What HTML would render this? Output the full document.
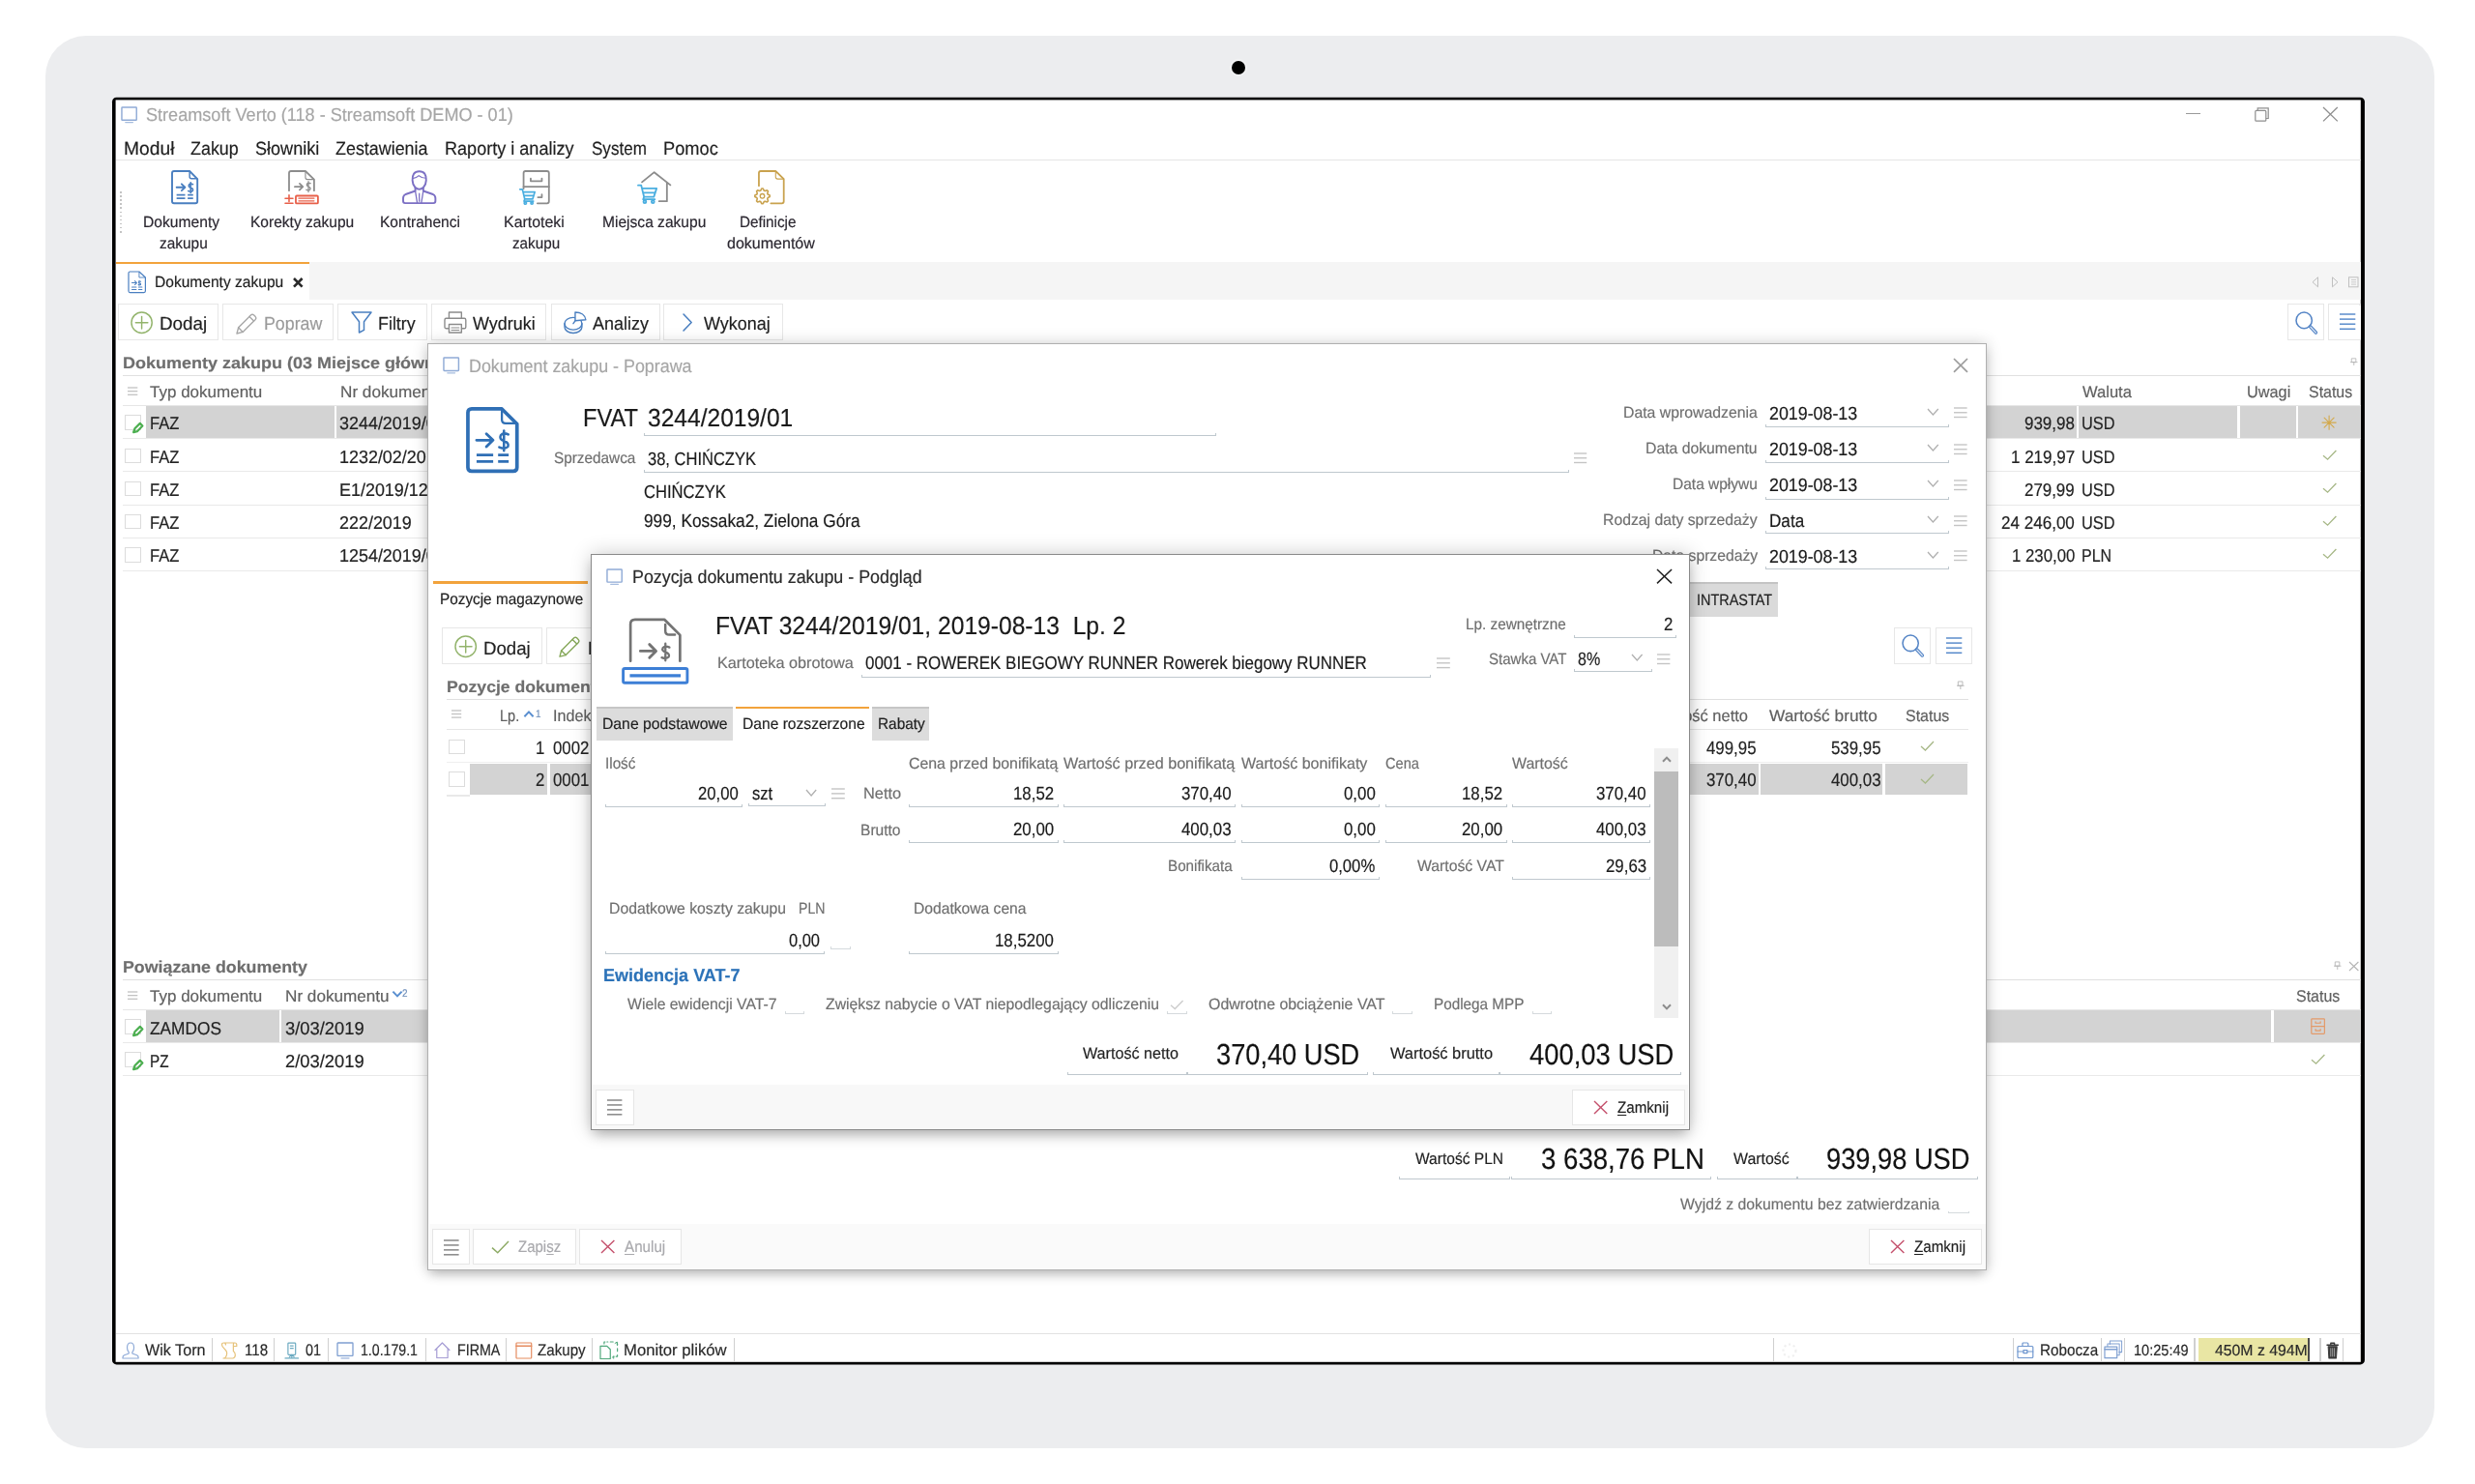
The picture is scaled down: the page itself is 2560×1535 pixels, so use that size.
<!DOCTYPE html>
<html lang="pl"><head><meta charset="utf-8"><title>Streamsoft Verto</title><style>
html,body{margin:0;padding:0;background:#fff;}
body{width:2560px;height:1535px;position:relative;overflow:hidden;font-family:"Liberation Sans",sans-serif;color:#222;filter:blur(0.45px);}
div,span.t,svg{position:absolute;}
span.t{white-space:pre;line-height:1;transform-origin:0 0;text-rendering:geometricPrecision;-webkit-text-stroke:0.18px currentColor;}
svg{overflow:visible;fill:none;}
u{text-decoration:underline;text-decoration-thickness:1px;text-underline-offset:2px;}
</style></head><body>
<div style="left:47.0px;top:37.3px;width:2471.3px;height:1460.5px;background:#ecedef;border-radius:42px;"></div>
<div style="left:1273.7px;top:62.6px;width:14.4px;height:14.4px;border-radius:50%;background:#000;box-shadow:0 0 2px 1.5px rgba(255,255,255,.55);"></div>
<svg style="left:0;top:0" width="2560" height="1535"><rect x="116" y="100.8" width="2329.9" height="1310.6" rx="4.5" fill="#000"/><rect x="119.6" y="103.4" width="2322.2" height="1305.4" fill="#fff"/></svg>
<svg style="left:125.00px;top:109.60px;" width="17.20" height="17.60" viewBox="0 0 18 18" preserveAspectRatio="none" stroke="#90abd6" stroke-width="1.5" stroke-linecap="round" stroke-linejoin="round"><rect x="1" y="1" width="16" height="13.6" rx="0.6"/><path d="M5 17h8" stroke-width="1.3" stroke-opacity="0.8"/></svg>
<span class="t" style="left:151.20px;top:110px;font-size:19.0px;transform:scaleX(0.9523);color:#a6a6a6;">Streamsoft Verto (118 - Streamsoft DEMO - 01)</span>
<div style="left:2261.0px;top:116.6px;width:15.0px;height:1.2px;background:#9a9a9a;"></div>
<svg style="left:2331.5px;top:111px" width="15" height="15" viewBox="0 0 15 15" stroke="#8e8e8e" stroke-width="1.2"><path d="M3.2 3.2V0.8H14.2V11.5H11.8"/><rect x="0.8" y="3.4" width="11" height="10.8" rx="1"/></svg>
<svg style="left:2400.40px;top:108.20px" width="20.80" height="20.40" stroke="#8e8e8e" stroke-width="1.3"><path d="M3 3L17.80 17.40M17.80 3L3 17.40"/></svg>
<span class="t" style="left:127.70px;top:145px;font-size:19.2px;transform:scaleX(1.0034);color:#1f1f1f;">Moduł</span>
<span class="t" style="left:196.70px;top:145px;font-size:19.2px;transform:scaleX(0.9330);color:#1f1f1f;">Zakup</span>
<span class="t" style="left:263.50px;top:145px;font-size:19.2px;transform:scaleX(0.9409);color:#1f1f1f;">Słowniki</span>
<span class="t" style="left:347.40px;top:145px;font-size:19.2px;transform:scaleX(0.9324);color:#1f1f1f;">Zestawienia</span>
<span class="t" style="left:460.20px;top:145px;font-size:19.2px;transform:scaleX(0.9416);color:#1f1f1f;">Raporty i analizy</span>
<span class="t" style="left:611.70px;top:145px;font-size:19.2px;transform:scaleX(0.8886);color:#1f1f1f;">System</span>
<span class="t" style="left:685.70px;top:145px;font-size:19.2px;transform:scaleX(0.9512);color:#1f1f1f;">Pomoc</span>
<div style="left:119.5px;top:165.2px;width:2322.5px;height:1.3px;background:#e6e6e6;"></div>
<div style="left:124.3px;top:198.0px;width:1.4px;height:1.6px;background:#c4c4c4;"></div>
<div style="left:124.3px;top:202.1px;width:1.4px;height:1.6px;background:#c4c4c4;"></div>
<div style="left:124.3px;top:206.2px;width:1.4px;height:1.6px;background:#c4c4c4;"></div>
<div style="left:124.3px;top:210.3px;width:1.4px;height:1.6px;background:#c4c4c4;"></div>
<div style="left:124.3px;top:214.4px;width:1.4px;height:1.6px;background:#c4c4c4;"></div>
<div style="left:124.3px;top:218.5px;width:1.4px;height:1.6px;background:#c4c4c4;"></div>
<div style="left:124.3px;top:222.6px;width:1.4px;height:1.6px;background:#c4c4c4;"></div>
<div style="left:124.3px;top:226.7px;width:1.4px;height:1.6px;background:#c4c4c4;"></div>
<div style="left:124.3px;top:230.8px;width:1.4px;height:1.6px;background:#c4c4c4;"></div>
<div style="left:124.3px;top:234.9px;width:1.4px;height:1.6px;background:#c4c4c4;"></div>
<div style="left:124.3px;top:239.0px;width:1.4px;height:1.6px;background:#c4c4c4;"></div>
<svg style="left:176.60px;top:175.80px;" width="28.20" height="35.30" viewBox="0 0 28 35" preserveAspectRatio="none" stroke="#4a7fc0" stroke-width="1.9" stroke-linecap="round" stroke-linejoin="round"><path d="M3 1H19L27 9V32Q27 34 25 34H3Q1 34 1 32V3Q1 1 3 1Z"/><path d="M19 1.5V6.6Q19 8.6 21 8.6H26.5" stroke-width="1.44"/><path d="M5.6 17.6H14M10.8 14.2L14.3 17.6L10.8 21" stroke-width="1.80"/><path d="M22.4 14.6Q19.8 13.3 18.4 15Q17.4 17 20 17.9Q23 18.9 22.2 21Q20.8 22.6 17.6 21.3M20.1 12.6V23.2" stroke-width="1.62"/><path d="M5.6 25.4H14.4M17 25.4H22.6M5.6 28.9H14.4M17 28.9H22.6" stroke-width="1.80" stroke-linecap="butt"/></svg>
<svg style="left:294.30px;top:175.80px;" width="35.90" height="35.30" viewBox="0 0 36 35" preserveAspectRatio="none" stroke="#8c8c8c" stroke-width="1.8" stroke-linecap="round" stroke-linejoin="round"><g stroke="#8c8c8c"><path d="M5 21V3Q5 1 7 1H22L31 9.5V21"/><path d="M22 1.5V7.5Q22 9.5 24 9.5H30.5" stroke-width="1.1"/><path d="M11 17H19M16 13.8L19.3 17L16 20.2"/><path d="M27.2 13.6Q24.6 12.4 23.6 14.1Q22.9 16 25.2 16.9Q27.9 17.9 26.9 19.9Q25.4 21.3 22.8 20.1M25.1 11.6V22.3" stroke-width="1.3"/></g><g stroke="#e8604a"><path d="M1 29H9M5 25.5V32.2M1 34H9" stroke-width="1.6"/><rect x="12" y="26.3" width="23" height="7.8" rx="1"/><path d="M15 28.9H31M15 31.6H31" stroke-width="1.2"/></g></svg>
<svg style="left:415.80px;top:175.80px;" width="35.40" height="35.30" viewBox="0 0 35 35" preserveAspectRatio="none" stroke="#7c70c4" stroke-width="1.9" stroke-linecap="round" stroke-linejoin="round"><path d="M10.5 10.5Q10 1.2 17.5 1.2Q25 1.2 24.5 10.5Q24.3 15 21.8 17.6Q19.6 19.6 17.5 19.6Q15.4 19.6 13.2 17.6Q10.7 15 10.5 10.5Z"/><path d="M10.6 8.2Q14 8.6 17 5.6Q20.5 8.2 24.4 8.2" stroke-width="1.2"/><path d="M13.4 18.4V21.3L3.5 24.8Q1 26 1 28.8V31.8Q1 33.8 3 33.8H32Q34 33.8 34 31.8V28.8Q34 26 31.5 24.8L21.6 21.3V18.4"/><path d="M13.4 21.3L15.4 33.5M21.6 21.3L19.6 33.5M17.5 24V32" stroke-width="1.3"/></svg>
<svg style="left:537.30px;top:175.80px;" width="31.80" height="35.30" viewBox="0 0 32 35" preserveAspectRatio="none" stroke="#8c8c8c" stroke-width="1.8" stroke-linecap="round" stroke-linejoin="round"><g stroke="#8c8c8c"><path d="M4.6 19V3Q4.6 1 6.6 1H29Q31 1 31 3V32Q31 34 29 34H19"/><path d="M4.6 17H31"/><path d="M12 8.5V11.2H23.6V8.5M19.5 27.8H23.6V25"/></g><g stroke="#4aaee0" stroke-width="1.7"><path d="M0.80 19.70H3.40L5.80 29.70H14.00L16.30 22.40H4.20M5.20 26.20H15.20M5.80 29.70L5.00 31.80H14.80"/><circle cx="6.40" cy="33.80" r="1.15"/><circle cx="13.20" cy="33.80" r="1.15"/></g></svg>
<svg style="left:658.80px;top:177.00px;" width="35.40" height="34.10" viewBox="0 0 35 34.5" preserveAspectRatio="none" stroke="#8c8c8c" stroke-width="1.8" stroke-linecap="round" stroke-linejoin="round"><g stroke="#8c8c8c"><path d="M5 11.5L17.5 1.2L34 14.5M30.5 12V31.5H22.5"/></g><g stroke="#4aaee0" stroke-width="1.8"><path d="M1.00 14.81H4.17L7.10 27.01H17.10L19.91 18.10H5.15M6.37 22.74H18.57M7.10 27.01L6.12 29.57H18.08"/><circle cx="7.83" cy="32.01" r="1.40"/><circle cx="16.13" cy="32.01" r="1.40"/></g></svg>
<svg style="left:779.70px;top:175.80px;" width="31.70" height="35.30" viewBox="0 0 32 35" preserveAspectRatio="none" stroke="#c9a24e" stroke-width="1.8" stroke-linecap="round" stroke-linejoin="round"><path d="M5 16V3Q5 1 7 1H22.5L31 9V32Q31 34 29 34H17.5"/><path d="M22.5 1.5V7Q22.5 9 24.5 9H30.5" stroke-width="1.1"/><path d="M16.36 25.84L16.36 27.36L14.34 28.34L13.89 29.43L14.63 31.55L13.55 32.63L11.43 31.89L10.34 32.34L9.36 34.36L7.84 34.36L6.86 32.34L5.77 31.89L3.65 32.63L2.57 31.55L3.31 29.43L2.86 28.34L0.84 27.36L0.84 25.84L2.86 24.86L3.31 23.77L2.57 21.65L3.65 20.57L5.77 21.31L6.86 20.86L7.84 18.84L9.36 18.84L10.34 20.86L11.43 21.31L13.55 20.57L14.63 21.65L13.89 23.77L14.34 24.86Z" stroke-width="1.6"/><circle cx="8.6" cy="26.6" r="2.3" stroke-width="1.3"/></svg>
<span class="t" style="left:148.40px;top:222px;font-size:16.2px;transform:scaleX(0.9662);color:#2b2730;">Dokumenty</span>
<span class="t" style="left:165.30px;top:244px;font-size:16.2px;transform:scaleX(0.9532);color:#2b2730;">zakupu</span>
<span class="t" style="left:259.20px;top:222px;font-size:16.2px;transform:scaleX(0.9606);color:#2b2730;">Korekty zakupu</span>
<span class="t" style="left:392.60px;top:222px;font-size:16.2px;transform:scaleX(0.9603);color:#2b2730;">Kontrahenci</span>
<span class="t" style="left:521.30px;top:222px;font-size:16.2px;transform:scaleX(0.9842);color:#2b2730;">Kartoteki</span>
<span class="t" style="left:529.70px;top:244px;font-size:16.2px;transform:scaleX(0.9417);color:#2b2730;">zakupu</span>
<span class="t" style="left:623.40px;top:222px;font-size:16.2px;transform:scaleX(0.9622);color:#2b2730;">Miejsca zakupu</span>
<span class="t" style="left:765.40px;top:222px;font-size:16.2px;transform:scaleX(0.9416);color:#2b2730;">Definicje</span>
<span class="t" style="left:752.00px;top:244px;font-size:16.2px;transform:scaleX(0.9898);color:#2b2730;">dokumentów</span>
<div style="left:119.5px;top:271.0px;width:2322.5px;height:39.0px;background:#f5f5f5;"></div>
<div style="left:119.5px;top:271.0px;width:200.5px;height:39.0px;background:#fff;"></div>
<div style="left:119.5px;top:270.6px;width:200.1px;height:2.8px;background:#f2a33c;"></div>
<svg style="left:131.80px;top:279.60px;" width="19.40" height="23.60" viewBox="0 0 19.5 23.5" preserveAspectRatio="none" stroke="#4a7fc0" stroke-width="1.2" stroke-linecap="round" stroke-linejoin="round"><path d="M2 1H12L18.5 7V21Q18.5 22.5 17 22.5H2.5Q1 22.5 1 21V2.5Q1 1 2.5 1Z"/><path d="M12 1.5V7H18" stroke-width="0.9"/><path d="M4.5 12.5H9M7.5 10.5L9.5 12.5L7.5 14.5M12 10.2V15.2M13.8 11.2Q11.5 10.6 11.4 12Q11.6 12.8 12.8 13Q14 13.4 13.6 14.4Q12.6 15 11.2 14.4" stroke-width="1"/><path d="M4.5 17H9M11.5 17H15M4.5 19.5H9M11.5 19.5H15" stroke-width="1"/></svg>
<span class="t" style="left:159.50px;top:284px;font-size:16.2px;transform:scaleX(0.9613);color:#1f1f1f;">Dokumenty zakupu</span>
<svg style="left:301.40px;top:285.00px" width="14.60" height="14.60" stroke="#2a2a2a" stroke-width="2.6"><path d="M3 3L11.60 11.60M11.60 3L3 11.60"/></svg>
<svg style="left:2390.5px;top:286px" width="50" height="12" viewBox="0 0 50 12" stroke="#c0c0c0" stroke-width="1"><path d="M6.5 0.8L1 5.8L6.5 10.8ZM21.5 0.8L27 5.8L21.5 10.8Z"/><rect x="38.5" y="0.8" width="9.5" height="10"/><path d="M41 3.5H46M41 5.8H46M41 8.1H46" stroke-width="0.8"/></svg>
<div style="left:122.0px;top:314.4px;width:103.7px;height:37.8px;background:#fff;border:1.2px solid #e7e7e7;box-sizing:border-box;"></div>
<div style="left:229.8px;top:314.4px;width:115.0px;height:37.8px;background:#fff;border:1.2px solid #e7e7e7;box-sizing:border-box;"></div>
<div style="left:348.8px;top:314.4px;width:93.0px;height:37.8px;background:#fff;border:1.2px solid #e7e7e7;box-sizing:border-box;"></div>
<div style="left:445.8px;top:314.4px;width:119.7px;height:37.8px;background:#fff;border:1.2px solid #e7e7e7;box-sizing:border-box;"></div>
<div style="left:569.5px;top:314.4px;width:113.0px;height:37.8px;background:#fff;border:1.2px solid #e7e7e7;box-sizing:border-box;"></div>
<div style="left:686.0px;top:314.4px;width:123.8px;height:37.8px;background:#fff;border:1.2px solid #e7e7e7;box-sizing:border-box;"></div>
<div style="left:2366.0px;top:314.4px;width:38.2px;height:37.8px;background:#fff;border:1.2px solid #e7e7e7;box-sizing:border-box;"></div>
<div style="left:2408.4px;top:314.4px;width:33.4px;height:37.8px;background:#fff;border:1.2px solid #e7e7e7;box-sizing:border-box;"></div>
<div style="left:2440.4px;top:314.4px;width:1.4px;height:37.8px;background:#fff;"></div>
<div style="left:2440.4px;top:314.4px;width:1.4px;height:1.2px;background:#e7e7e7;"></div>
<div style="left:2440.4px;top:351.0px;width:1.4px;height:1.2px;background:#e7e7e7;"></div>
<svg style="left:135.20px;top:322.40px;" width="23.20" height="23.40" viewBox="0 0 24 24" preserveAspectRatio="none" stroke="#93b46c" stroke-width="1.5" stroke-linecap="round" stroke-linejoin="round"><circle cx="12" cy="12" r="11"/><path d="M12 5.5V18.5M5.5 12H18.5"/></svg>
<span class="t" style="left:164.70px;top:326px;font-size:19.0px;transform:scaleX(0.9902);color:#1f1f1f;">Dodaj</span>
<svg style="left:243.50px;top:323.50px;" width="22.00" height="22.00" viewBox="0 0 22 22" preserveAspectRatio="none" stroke="#a8a8a8" stroke-width="1.4" stroke-linecap="round" stroke-linejoin="round"><path d="M1 21L2.6 14.8L15.6 1.8Q17 0.6 18.4 1.8L20.2 3.6Q21.4 5 20.2 6.4L7.2 19.4Z"/><path d="M2.6 14.8L7.2 19.4M14 3.5L18.5 8"/></svg>
<span class="t" style="left:272.60px;top:326px;font-size:19.0px;transform:scaleX(0.9364);color:#9a9a9a;">Popraw</span>
<svg style="left:363.20px;top:322.00px;" width="22.00" height="23.00" viewBox="0 0 22 22.5" preserveAspectRatio="none" stroke="#4a7fc0" stroke-width="1.5" stroke-linecap="round" stroke-linejoin="round"><path d="M1 1H21L13.5 10.5V19L8.5 21.5V10.5Z"/></svg>
<span class="t" style="left:391.30px;top:326px;font-size:19.0px;transform:scaleX(0.9408);color:#1f1f1f;">Filtry</span>
<svg style="left:458.60px;top:321.50px;" width="23.80" height="23.00" viewBox="0 0 24 22" preserveAspectRatio="none" stroke="#8c8c8c" stroke-width="1.4" stroke-linecap="round" stroke-linejoin="round"><path d="M5.5 7V1H18.5V7"/><rect x="1" y="7" width="22" height="10" rx="1.5"/><path d="M5.5 13H18.5V21H5.5Z" fill="#fff"/><path d="M8 16.2H16M8 18.6H16" stroke-width="1"/></svg>
<span class="t" style="left:488.60px;top:326px;font-size:19.0px;transform:scaleX(0.9461);color:#1f1f1f;">Wydruki</span>
<svg style="left:582.50px;top:321.00px;" width="23.90" height="24.50" viewBox="0 0 24 25" preserveAspectRatio="none" stroke="#4a7fc0" stroke-width="1.4" stroke-linecap="round" stroke-linejoin="round"><ellipse cx="10" cy="14" rx="9" ry="6.5"/><path d="M1 14V17.5C1 21 5 24 10 24S19 21 19 17.5V14"/><path d="M12 11V2C18 2 22.5 5 23 10Z" fill="#fff"/><path d="M10 14L12 11"/></svg>
<span class="t" style="left:612.50px;top:326px;font-size:19.0px;transform:scaleX(0.9466);color:#1f1f1f;">Analizy</span>
<svg style="left:706.40px;top:323.50px;" width="10.20" height="19.00" viewBox="0 0 10 19" preserveAspectRatio="none" stroke="#4a7fc0" stroke-width="1.5" stroke-linecap="round" stroke-linejoin="round"><path d="M1 1L9 9.5L1 18"/></svg>
<span class="t" style="left:728.20px;top:326px;font-size:19.0px;transform:scaleX(0.9467);color:#1f1f1f;">Wykonaj</span>
<svg style="left:2373.50px;top:321.50px;" width="24.50" height="25.00" viewBox="0 0 24 24" preserveAspectRatio="none" stroke="#5585c6" stroke-width="1.5" stroke-linecap="round" stroke-linejoin="round"><circle cx="9" cy="9" r="8"/><path d="M15.2 15.2L21 21.2" stroke-width="3.4"/><path d="M15.6 15.6L21 21.2" stroke="#dfe9f6" stroke-width="1.2"/></svg>
<svg style="left:2420.00px;top:322.00px" width="16.30" height="21.30" stroke="#4f84c8" stroke-width="1.4"><path d="M0 3.00H16.30"/><path d="M0 8.10H16.30"/><path d="M0 13.20H16.30"/><path d="M0 18.30H16.30"/></svg>
<span class="t" style="left:127.20px;top:368px;font-size:16.8px;transform:scaleX(1.0720);color:#6e6e6e;font-weight:700;">Dokumenty zakupu (03 Miejsce główne)</span>
<svg style="left:2431.00px;top:369.50px;" width="7.50" height="8.00" viewBox="0 0 9 9.5" preserveAspectRatio="none" stroke="#b5b5b5" stroke-width="1" stroke-linecap="round" stroke-linejoin="round"><path d="M2 1H7V5.5H2ZM0.5 5.5H8.5M4.5 5.5V9"/></svg>
<div style="left:127.0px;top:388.0px;width:2315.0px;height:1.3px;background:#e0e0e0;"></div>
<svg style="left:132.30px;top:397.80px" width="10.30" height="13.30" stroke="#c2c2c2" stroke-width="1.3"><path d="M0 3.00H10.30"/><path d="M0 6.65H10.30"/><path d="M0 10.30H10.30"/></svg>
<span class="t" style="left:154.90px;top:398px;font-size:16.9px;transform:scaleX(1.0070);color:#606060;">Typ dokumentu</span>
<span class="t" style="left:351.60px;top:398px;font-size:16.9px;transform:scaleX(1.0150);color:#606060;">Nr dokumentu</span>
<span class="t" style="left:2153.70px;top:398px;font-size:16.9px;transform:scaleX(0.9798);color:#606060;">Waluta</span>
<span class="t" style="left:2323.70px;top:398px;font-size:16.9px;transform:scaleX(0.9642);color:#606060;">Uwagi</span>
<span class="t" style="left:2388.00px;top:398px;font-size:16.9px;transform:scaleX(0.9434);color:#606060;">Status</span>
<div style="left:127.0px;top:419.3px;width:2315.0px;height:1.2px;background:#e6e6e6;"></div>
<div style="left:151.0px;top:420.3px;width:194.6px;height:32.9px;background:#d3d3d3;"></div>
<div style="left:348.0px;top:420.3px;width:1799.8px;height:32.9px;background:#d3d3d3;"></div>
<div style="left:2150.4px;top:420.3px;width:163.6px;height:32.9px;background:#d3d3d3;"></div>
<div style="left:2316.6px;top:420.3px;width:58.1px;height:32.9px;background:#d3d3d3;"></div>
<div style="left:2377.3px;top:420.3px;width:64.7px;height:32.9px;background:#d3d3d3;"></div>
<div style="left:127.0px;top:453.2px;width:2315.0px;height:1.2px;background:#e9e9e9;"></div>
<div style="left:129.0px;top:429.4px;width:16.7px;height:15.5px;background:#fff;border:1px solid #dcdcdc;box-sizing:border-box;"></div>
<svg style="left:136.60px;top:436.70px;" width="11.40" height="11.20" viewBox="0 0 10.5 10" preserveAspectRatio="none" stroke="#4caf50" stroke-width="2.0" stroke-linecap="round" stroke-linejoin="round"><path d="M1 9L2.2 5.6L7.2 0.8L9.6 3.2L4.6 8.2Z"/></svg>
<span class="t" style="left:154.90px;top:429px;font-size:18.6px;transform:scaleX(0.8907);">FAZ</span>
<span class="t" style="left:351.20px;top:429px;font-size:18.6px;transform:scaleX(0.9644);">3244/2019/01</span>
<span class="t" style="left:2094.00px;top:429px;font-size:18.6px;transform:scaleX(0.9119);">939,98</span>
<span class="t" style="left:2153.40px;top:429px;font-size:18.6px;transform:scaleX(0.8791);">USD</span>
<svg style="left:2402.10px;top:429.70px;" width="14.20" height="14.20" viewBox="0 0 14.2 14.2" preserveAspectRatio="none" stroke="#d3a94c" stroke-width="1.1" stroke-linecap="round" stroke-linejoin="round"><path d="M7.10 0.00L7.10 14.20M12.12 2.08L2.08 12.12M14.20 7.10L0.00 7.10M12.12 12.12L2.08 2.08"/></svg>
<div style="left:127.0px;top:487.3px;width:2315.0px;height:1.2px;background:#e9e9e9;"></div>
<div style="left:129.0px;top:463.6px;width:16.7px;height:15.5px;background:#fff;border:1px solid #dcdcdc;box-sizing:border-box;"></div>
<span class="t" style="left:154.90px;top:464px;font-size:18.6px;transform:scaleX(0.8907);">FAZ</span>
<span class="t" style="left:351.20px;top:464px;font-size:18.6px;transform:scaleX(0.9644);">1232/02/2019</span>
<span class="t" style="left:2079.70px;top:464px;font-size:18.6px;transform:scaleX(0.9138);">1 219,97</span>
<span class="t" style="left:2153.40px;top:464px;font-size:18.6px;transform:scaleX(0.8791);">USD</span>
<svg style="left:2400.40px;top:462.97px" width="19.40" height="15.20" stroke="#a6b786" stroke-width="1.3"><path d="M3.00 8.15L7.56 12.20L16.40 3.00" stroke-linejoin="miter" stroke-linecap="butt"/></svg>
<div style="left:127.0px;top:521.5px;width:2315.0px;height:1.2px;background:#e9e9e9;"></div>
<div style="left:129.0px;top:497.7px;width:16.7px;height:15.5px;background:#fff;border:1px solid #dcdcdc;box-sizing:border-box;"></div>
<span class="t" style="left:154.90px;top:498px;font-size:18.6px;transform:scaleX(0.8907);">FAZ</span>
<span class="t" style="left:351.20px;top:498px;font-size:18.6px;transform:scaleX(0.9644);">E1/2019/123</span>
<span class="t" style="left:2094.20px;top:498px;font-size:18.6px;transform:scaleX(0.9084);">279,99</span>
<span class="t" style="left:2153.40px;top:498px;font-size:18.6px;transform:scaleX(0.8791);">USD</span>
<svg style="left:2400.40px;top:497.14px" width="19.40" height="15.20" stroke="#a6b786" stroke-width="1.3"><path d="M3.00 8.15L7.56 12.20L16.40 3.00" stroke-linejoin="miter" stroke-linecap="butt"/></svg>
<div style="left:127.0px;top:555.7px;width:2315.0px;height:1.2px;background:#e9e9e9;"></div>
<div style="left:129.0px;top:531.9px;width:16.7px;height:15.5px;background:#fff;border:1px solid #dcdcdc;box-sizing:border-box;"></div>
<span class="t" style="left:154.90px;top:532px;font-size:18.6px;transform:scaleX(0.8907);">FAZ</span>
<span class="t" style="left:351.20px;top:532px;font-size:18.6px;transform:scaleX(0.9644);">222/2019</span>
<span class="t" style="left:2070.00px;top:532px;font-size:18.6px;transform:scaleX(0.9170);">24 246,00</span>
<span class="t" style="left:2153.40px;top:532px;font-size:18.6px;transform:scaleX(0.8791);">USD</span>
<svg style="left:2400.40px;top:531.31px" width="19.40" height="15.20" stroke="#a6b786" stroke-width="1.3"><path d="M3.00 8.15L7.56 12.20L16.40 3.00" stroke-linejoin="miter" stroke-linecap="butt"/></svg>
<div style="left:127.0px;top:589.8px;width:2315.0px;height:1.2px;background:#e9e9e9;"></div>
<div style="left:129.0px;top:566.1px;width:16.7px;height:15.5px;background:#fff;border:1px solid #dcdcdc;box-sizing:border-box;"></div>
<span class="t" style="left:154.90px;top:566px;font-size:18.6px;transform:scaleX(0.8907);">FAZ</span>
<span class="t" style="left:351.20px;top:566px;font-size:18.6px;transform:scaleX(0.9644);">1254/2019/01</span>
<span class="t" style="left:2080.50px;top:566px;font-size:18.6px;transform:scaleX(0.9027);">1 230,00</span>
<span class="t" style="left:2153.40px;top:566px;font-size:18.6px;transform:scaleX(0.8597);">PLN</span>
<svg style="left:2400.40px;top:565.48px" width="19.40" height="15.20" stroke="#a6b786" stroke-width="1.3"><path d="M3.00 8.15L7.56 12.20L16.40 3.00" stroke-linejoin="miter" stroke-linecap="butt"/></svg>
<span class="t" style="left:127.20px;top:992px;font-size:17.2px;transform:scaleX(1.0354);color:#6e6e6e;font-weight:700;">Powiązane dokumenty</span>
<svg style="left:2414.30px;top:994.40px;" width="7.50" height="9.00" viewBox="0 0 9 9.5" preserveAspectRatio="none" stroke="#b5b5b5" stroke-width="1" stroke-linecap="round" stroke-linejoin="round"><path d="M2 1H7V5.5H2ZM0.5 5.5H8.5M4.5 5.5V9"/></svg>
<svg style="left:2427.00px;top:991.60px" width="15.40" height="15.00" stroke="#b5b5b5" stroke-width="1.1"><path d="M3 3L12.40 12.00M12.40 3L3 12.00"/></svg>
<div style="left:127.0px;top:1012.8px;width:2315.0px;height:1.3px;background:#e0e0e0;"></div>
<svg style="left:132.30px;top:1023.10px" width="10.30" height="13.30" stroke="#c2c2c2" stroke-width="1.3"><path d="M0 3.00H10.30"/><path d="M0 6.65H10.30"/><path d="M0 10.30H10.30"/></svg>
<span class="t" style="left:154.90px;top:1023px;font-size:16.9px;transform:scaleX(1.0070);color:#606060;">Typ dokumentu</span>
<span class="t" style="left:294.60px;top:1023px;font-size:16.9px;transform:scaleX(1.0148);color:#606060;">Nr dokumentu</span>
<svg style="left:404.6px;top:1021px" width="17" height="14" viewBox="0 0 17 14" stroke="#5a8fd0" stroke-width="2"><path d="M1.4 4.6L6 9.4L10.6 4.6"/></svg>
<span class="t" style="left:416.40px;top:1023px;font-size:11.0px;transform:scaleX(0.9000);color:#6f8fba;">2</span>
<span class="t" style="left:2374.70px;top:1023px;font-size:16.9px;transform:scaleX(0.9455);color:#606060;">Status</span>
<div style="left:127.0px;top:1043.9px;width:2315.0px;height:1.2px;background:#e6e6e6;"></div>
<div style="left:151.0px;top:1045.0px;width:137.5px;height:32.9px;background:#d3d3d3;"></div>
<div style="left:291.0px;top:1045.0px;width:2058.0px;height:32.9px;background:#d3d3d3;"></div>
<div style="left:2351.5px;top:1045.0px;width:90.5px;height:32.9px;background:#d3d3d3;"></div>
<div style="left:127.0px;top:1078.0px;width:2315.0px;height:1.2px;background:#e9e9e9;"></div>
<div style="left:127.0px;top:1112.3px;width:2315.0px;height:1.2px;background:#e9e9e9;"></div>
<div style="left:129.0px;top:1054.1px;width:16.7px;height:15.5px;background:#fff;border:1px solid #dcdcdc;box-sizing:border-box;"></div>
<svg style="left:136.60px;top:1061.40px;" width="11.40" height="11.20" viewBox="0 0 10.5 10" preserveAspectRatio="none" stroke="#4caf50" stroke-width="2.0" stroke-linecap="round" stroke-linejoin="round"><path d="M1 9L2.2 5.6L7.2 0.8L9.6 3.2L4.6 8.2Z"/></svg>
<span class="t" style="left:154.90px;top:1055px;font-size:18.6px;transform:scaleX(0.9296);">ZAMDOS</span>
<span class="t" style="left:294.60px;top:1055px;font-size:18.6px;transform:scaleX(0.9883);">3/03/2019</span>
<div style="left:129.0px;top:1088.3px;width:16.7px;height:15.5px;background:#fff;border:1px solid #dcdcdc;box-sizing:border-box;"></div>
<svg style="left:136.60px;top:1095.57px;" width="11.40" height="11.20" viewBox="0 0 10.5 10" preserveAspectRatio="none" stroke="#4caf50" stroke-width="2.0" stroke-linecap="round" stroke-linejoin="round"><path d="M1 9L2.2 5.6L7.2 0.8L9.6 3.2L4.6 8.2Z"/></svg>
<span class="t" style="left:154.90px;top:1089px;font-size:18.6px;transform:scaleX(0.8233);">PZ</span>
<span class="t" style="left:294.60px;top:1089px;font-size:18.6px;transform:scaleX(0.9883);">2/03/2019</span>
<svg style="left:2389.60px;top:1052.60px;" width="15.20" height="17.20" viewBox="0 0 15 17" preserveAspectRatio="none" stroke="#e39a6a" stroke-width="1.2" stroke-linecap="round" stroke-linejoin="round"><rect x="0.8" y="0.8" width="13.4" height="15.4" rx="0.8"/><path d="M0.8 8.5H14.2M5 3.8V5.2H10V3.8M5 11.5V12.9H10V11.5"/></svg>
<svg style="left:2388.20px;top:1087.60px" width="19.40" height="15.20" stroke="#a6b786" stroke-width="1.3"><path d="M3.00 8.15L7.56 12.20L16.40 3.00" stroke-linejoin="miter" stroke-linecap="butt"/></svg>
<div style="left:119.5px;top:1378.9px;width:2322.5px;height:1.4px;background:#e2e2e2;"></div>
<div style="left:219.0px;top:1384.0px;width:1.2px;height:24.4px;background:#d0d0d0;"></div>
<div style="left:283.1px;top:1384.0px;width:1.2px;height:24.4px;background:#d0d0d0;"></div>
<div style="left:338.8px;top:1384.0px;width:1.2px;height:24.4px;background:#d0d0d0;"></div>
<div style="left:439.7px;top:1384.0px;width:1.2px;height:24.4px;background:#d0d0d0;"></div>
<div style="left:523.3px;top:1384.0px;width:1.2px;height:24.4px;background:#d0d0d0;"></div>
<div style="left:611.8px;top:1384.0px;width:1.2px;height:24.4px;background:#d0d0d0;"></div>
<div style="left:758.7px;top:1384.0px;width:1.2px;height:24.4px;background:#d0d0d0;"></div>
<div style="left:1834.1px;top:1384.0px;width:1.2px;height:24.4px;background:#d0d0d0;"></div>
<div style="left:2081.7px;top:1384.0px;width:1.2px;height:24.4px;background:#d0d0d0;"></div>
<div style="left:2173.0px;top:1384.0px;width:1.2px;height:24.4px;background:#d0d0d0;"></div>
<div style="left:2197.1px;top:1384.0px;width:1.2px;height:24.4px;background:#d0d0d0;"></div>
<div style="left:2269.4px;top:1384.0px;width:1.2px;height:24.4px;background:#d0d0d0;"></div>
<div style="left:2399.4px;top:1384.0px;width:1.2px;height:24.4px;background:#d0d0d0;"></div>
<div style="left:2422.8px;top:1384.0px;width:1.2px;height:24.4px;background:#d0d0d0;"></div>
<svg style="left:125.90px;top:1387.50px;" width="18.10" height="18.00" viewBox="0 0 18 18" preserveAspectRatio="none" stroke="#8fabd8" stroke-width="1.2" stroke-linecap="round" stroke-linejoin="round"><path d="M5.5 6Q5.5 1 9 1Q12.5 1 12.5 6Q12.5 9 10.8 10.6V12L15.5 13.8Q17 14.5 17 16V17H1V16Q1 14.5 2.5 13.8L7.2 12V10.6Q5.5 9 5.5 6Z"/></svg>
<span class="t" style="left:150.00px;top:1389px;font-size:16.8px;transform:scaleX(0.9628);color:#2a2a2a;">Wik Torn</span>
<svg style="left:228.00px;top:1387.50px;" width="18.30" height="18.00" viewBox="0 0 18.5 18" preserveAspectRatio="none" stroke="#e6c27a" stroke-width="1.2" stroke-linecap="round" stroke-linejoin="round"><path d="M3.5 1H15Q17 1 17 3V4.5H13.5M13.5 4.5V3Q13.5 1 15 1M5.5 3Q5.5 1 3.5 1Q1.5 1 1.5 3Q1.5 5 4.5 7.5Q7.5 10 6.5 13.5Q6 16.5 3 17H13Q15.5 16.5 15.5 13.5Q15.5 11 13.5 9.5V4.5"/></svg>
<span class="t" style="left:252.70px;top:1389px;font-size:16.8px;transform:scaleX(0.8994);color:#2a2a2a;">118</span>
<svg style="left:293.60px;top:1387.50px;" width="15.60" height="18.00" viewBox="0 0 16 17.5" preserveAspectRatio="none" stroke="#6aa9c0" stroke-width="1.2" stroke-linecap="round" stroke-linejoin="round"><rect x="4" y="1" width="8" height="12" rx="0.8"/><path d="M6.5 4H9.5M6.5 6.5H9.5M8 13V16M1 16.5H15M5.5 15L8 13L10.5 15"/></svg>
<span class="t" style="left:315.60px;top:1389px;font-size:16.8px;transform:scaleX(0.8580);color:#2a2a2a;">01</span>
<svg style="left:348.00px;top:1387.80px;" width="18.00" height="17.80" viewBox="0 0 18 18" preserveAspectRatio="none" stroke="#7f9fd1" stroke-width="1.3" stroke-linecap="round" stroke-linejoin="round"><rect x="1" y="1" width="16" height="13.6" rx="0.6"/><path d="M5 17h8" stroke-width="1.3" stroke-opacity="0.8"/></svg>
<span class="t" style="left:373.00px;top:1389px;font-size:16.8px;transform:scaleX(0.8422);color:#2a2a2a;">1.0.179.1</span>
<svg style="left:449.40px;top:1388.00px;" width="16.90" height="17.50" viewBox="0 0 17 17.5" preserveAspectRatio="none" stroke="#a59cd4" stroke-width="1.2" stroke-linecap="round" stroke-linejoin="round"><path d="M1 8.5L8.5 1L16 8.5M2.8 7V16.5H14.2V7"/></svg>
<span class="t" style="left:472.70px;top:1389px;font-size:16.8px;transform:scaleX(0.8503);color:#2a2a2a;">FIRMA</span>
<svg style="left:532.70px;top:1387.50px;" width="17.70" height="18.00" viewBox="0 0 18 18" preserveAspectRatio="none" stroke="#e58b5f" stroke-width="1.2" stroke-linecap="round" stroke-linejoin="round"><rect x="1" y="1" width="16" height="16" rx="0.8"/><path d="M1 4.2H17" stroke-width="1.6"/></svg>
<span class="t" style="left:556.30px;top:1389px;font-size:16.8px;transform:scaleX(0.9019);color:#2a2a2a;">Zakupy</span>
<svg style="left:620.20px;top:1386.50px;" width="19.60" height="19.50" viewBox="0 0 20 20" preserveAspectRatio="none" stroke="#4fa77a" stroke-width="1.2" stroke-linecap="round" stroke-linejoin="round"><path d="M1 5.5H8L11.5 9V19H1Z"/><path d="M5 3V1H9M11.5 1H15M18.5 1.5L19 5M19 8V12M19 15V16.5H15" stroke-dasharray="3 2"/><path d="M16.5 2.5L18.5 1.2L19.2 3.4M13.5 17.6L15 16.4L15 18.6" stroke-width="1"/></svg>
<span class="t" style="left:645.20px;top:1389px;font-size:16.8px;transform:scaleX(0.9941);color:#2a2a2a;">Monitor plików</span>
<svg style="left:1843px;top:1388.5px" width="16" height="16" viewBox="0 0 16 16" stroke="#f0f0f0" stroke-width="2.2" stroke-dasharray="2.2 2.6"><circle cx="8" cy="8" r="6.5"/></svg>
<svg style="left:2086.00px;top:1388.00px;" width="17.80" height="17.50" viewBox="0 0 18 17.5" preserveAspectRatio="none" stroke="#6f97cf" stroke-width="1.2" stroke-linecap="round" stroke-linejoin="round"><rect x="1" y="4.5" width="16" height="12" rx="1"/><path d="M6 4.5V2Q6 1 7 1H11Q12 1 12 2V4.5M1 10H7M11 10H17"/><rect x="7" y="8.6" width="4" height="3"/></svg>
<span class="t" style="left:2110.20px;top:1389px;font-size:16.8px;transform:scaleX(0.9087);color:#2a2a2a;">Robocza</span>
<svg style="left:2176.20px;top:1386.30px;" width="19.60" height="19.70" viewBox="0 0 20 19.5" preserveAspectRatio="none" stroke="#7f9fd1" stroke-width="1.2" stroke-linecap="round" stroke-linejoin="round"><path d="M6.5 4.5V1H19V12.5H16M4 7.5V4H16.5V15.5H13.5" stroke-width="1"/><rect x="1" y="7" width="13" height="11.5" fill="#fff"/><path d="M1 9.6H14" stroke-width="1.5"/></svg>
<span class="t" style="left:2206.70px;top:1390px;font-size:16.0px;transform:scaleX(0.9098);color:#2a2a2a;">10:25:49</span>
<div style="left:2273.8px;top:1384.2px;width:114.6px;height:24.2px;background:#e9e6a4;"></div>
<div style="left:2387.4px;top:1384.2px;width:1.2px;height:24.2px;background:#4a4a4a;"></div>
<span class="t" style="left:2290.60px;top:1390px;font-size:16.0px;transform:scaleX(0.9880);color:#2a2a2a;">450M z 494M</span>
<svg style="left:2405.60px;top:1387.60px;" width="13.40" height="18.00" viewBox="0 0 14 17.5" preserveAspectRatio="none" stroke="#3a3a3a" stroke-width="1.2" stroke-linecap="round" stroke-linejoin="round"><path d="M1 3.2H13M5 3V1.2H9V3" stroke-width="1.4"/><path d="M2.2 4.6H11.8L11 16.5H3Z" fill="#3a3a3a" stroke-width="1"/><path d="M5 6.5V14.5M7 6.5V14.5M9 6.5V14.5" stroke="#b8b8b8" stroke-width="0.8"/></svg>
<div style="left:442.0px;top:354.6px;width:1613.4px;height:959.2px;background:#fff;border:1.6px solid #b0b0b0;box-sizing:border-box;box-shadow:0 0 15px rgba(0,0,0,.19),0 6px 11px -3px rgba(0,0,0,.22);"></div>
<svg style="left:457.60px;top:369.20px;" width="17.40" height="17.80" viewBox="0 0 18 18" preserveAspectRatio="none" stroke="#90abd6" stroke-width="1.5" stroke-linecap="round" stroke-linejoin="round"><rect x="1" y="1" width="16" height="13.6" rx="0.6"/><path d="M5 17h8" stroke-width="1.3" stroke-opacity="0.8"/></svg>
<span class="t" style="left:485.00px;top:370px;font-size:19.0px;transform:scaleX(0.9408);color:#a6a6a6;">Dokument zakupu - Poprawa</span>
<svg style="left:2018.40px;top:368.20px" width="20.00" height="19.80" stroke="#9c9c9c" stroke-width="1.7"><path d="M3 3L17.00 16.80M17.00 3L3 16.80"/></svg>
<svg style="left:482.30px;top:420.60px;" width="54.70" height="68.30" viewBox="0 0 28 35" preserveAspectRatio="none" stroke="#2f6fb5" stroke-width="1.9" stroke-linecap="round" stroke-linejoin="round"><path d="M3 1H19L27 9V32Q27 34 25 34H3Q1 34 1 32V3Q1 1 3 1Z"/><path d="M19 1.5V6.6Q19 8.6 21 8.6H26.5" stroke-width="1.16"/><path d="M5.6 17.6H14M10.8 14.2L14.3 17.6L10.8 21" stroke-width="1.45"/><path d="M22.4 14.6Q19.8 13.3 18.4 15Q17.4 17 20 17.9Q23 18.9 22.2 21Q20.8 22.6 17.6 21.3M20.1 12.6V23.2" stroke-width="1.30"/><path d="M5.6 25.4H14.4M17 25.4H22.6M5.6 28.9H14.4M17 28.9H22.6" stroke-width="1.45" stroke-linecap="butt"/></svg>
<span class="t" style="left:603.40px;top:419px;font-size:26.0px;transform:scaleX(0.9100);color:#1a1a1a;">FVAT</span>
<span class="t" style="left:670.00px;top:419px;font-size:26.0px;transform:scaleX(0.9447);color:#1a1a1a;">3244/2019/01</span>
<div style="left:665.5px;top:448.1px;width:592.9px;height:3.1px;border:1.4px solid #bfc8ce;border-top:none;box-sizing:border-box;"></div>
<span class="t" style="left:573.20px;top:466px;font-size:16.3px;transform:scaleX(0.9417);color:#6f6f6f;">Sprzedawca</span>
<span class="t" style="left:670.00px;top:466px;font-size:19.0px;transform:scaleX(0.8694);color:#1a1a1a;">38, CHIŃCZYK</span>
<div style="left:665.5px;top:486.4px;width:957.0px;height:3.1px;border:1.4px solid #bfc8ce;border-top:none;box-sizing:border-box;"></div>
<svg style="left:1628.40px;top:466.40px" width="13.20" height="15.50" stroke="#c4c4c4" stroke-width="1.4"><path d="M0 3.00H13.20"/><path d="M0 7.75H13.20"/><path d="M0 12.50H13.20"/></svg>
<span class="t" style="left:665.60px;top:500px;font-size:19.0px;transform:scaleX(0.8744);color:#1a1a1a;">CHIŃCZYK</span>
<span class="t" style="left:665.60px;top:530px;font-size:19.0px;transform:scaleX(0.9088);color:#1a1a1a;">999, Kossaka2, Zielona Góra</span>
<span class="t" style="left:1679.00px;top:419px;font-size:16.3px;transform:scaleX(0.9707);color:#6f6f6f;">Data wprowadzenia</span>
<span class="t" style="left:1829.80px;top:419px;font-size:19.0px;transform:scaleX(0.9384);color:#1a1a1a;">2019-08-13</span>
<div style="left:1825.6px;top:438.7px;width:190.6px;height:3.1px;border:1.4px solid #bfc8ce;border-top:none;box-sizing:border-box;"></div>
<svg style="left:1991.20px;top:419.80px" width="16.80" height="12.00" stroke="#b0b0b0" stroke-width="1.3"><path d="M3 3L8.40 9.00L13.80 3"/></svg>
<svg style="left:2021.00px;top:419.30px" width="13.60" height="15.50" stroke="#c4c4c4" stroke-width="1.4"><path d="M0 3.00H13.60"/><path d="M0 7.75H13.60"/><path d="M0 12.50H13.60"/></svg>
<span class="t" style="left:1702.20px;top:456px;font-size:16.3px;transform:scaleX(0.9679);color:#6f6f6f;">Data dokumentu</span>
<span class="t" style="left:1829.80px;top:456px;font-size:19.0px;transform:scaleX(0.9384);color:#1a1a1a;">2019-08-13</span>
<div style="left:1825.6px;top:476.2px;width:190.6px;height:3.1px;border:1.4px solid #bfc8ce;border-top:none;box-sizing:border-box;"></div>
<svg style="left:1991.20px;top:457.20px" width="16.80" height="12.00" stroke="#b0b0b0" stroke-width="1.3"><path d="M3 3L8.40 9.00L13.80 3"/></svg>
<svg style="left:2021.00px;top:456.70px" width="13.60" height="15.50" stroke="#c4c4c4" stroke-width="1.4"><path d="M0 3.00H13.60"/><path d="M0 7.75H13.60"/><path d="M0 12.50H13.60"/></svg>
<span class="t" style="left:1730.00px;top:493px;font-size:16.3px;transform:scaleX(0.9522);color:#6f6f6f;">Data wpływu</span>
<span class="t" style="left:1829.80px;top:493px;font-size:19.0px;transform:scaleX(0.9384);color:#1a1a1a;">2019-08-13</span>
<div style="left:1825.6px;top:513.5px;width:190.6px;height:3.1px;border:1.4px solid #bfc8ce;border-top:none;box-sizing:border-box;"></div>
<svg style="left:1991.20px;top:494.40px" width="16.80" height="12.00" stroke="#b0b0b0" stroke-width="1.3"><path d="M3 3L8.40 9.00L13.80 3"/></svg>
<svg style="left:2021.00px;top:493.90px" width="13.60" height="15.50" stroke="#c4c4c4" stroke-width="1.4"><path d="M0 3.00H13.60"/><path d="M0 7.75H13.60"/><path d="M0 12.50H13.60"/></svg>
<span class="t" style="left:1658.20px;top:530px;font-size:16.3px;transform:scaleX(0.9692);color:#6f6f6f;">Rodzaj daty sprzedaży</span>
<span class="t" style="left:1829.80px;top:530px;font-size:19.0px;transform:scaleX(0.9008);color:#1a1a1a;">Data</span>
<div style="left:1825.6px;top:548.7px;width:190.6px;height:3.1px;border:1.4px solid #bfc8ce;border-top:none;box-sizing:border-box;"></div>
<svg style="left:1991.20px;top:531.20px" width="16.80" height="12.00" stroke="#b0b0b0" stroke-width="1.3"><path d="M3 3L8.40 9.00L13.80 3"/></svg>
<svg style="left:2021.00px;top:530.70px" width="13.60" height="15.50" stroke="#c4c4c4" stroke-width="1.4"><path d="M0 3.00H13.60"/><path d="M0 7.75H13.60"/><path d="M0 12.50H13.60"/></svg>
<span class="t" style="left:1708.70px;top:567px;font-size:16.3px;transform:scaleX(0.9648);color:#6f6f6f;">Data sprzedaży</span>
<span class="t" style="left:1829.80px;top:567px;font-size:19.0px;transform:scaleX(0.9384);color:#1a1a1a;">2019-08-13</span>
<div style="left:1825.6px;top:586.0px;width:190.6px;height:3.1px;border:1.4px solid #bfc8ce;border-top:none;box-sizing:border-box;"></div>
<svg style="left:1991.20px;top:567.80px" width="16.80" height="12.00" stroke="#b0b0b0" stroke-width="1.3"><path d="M3 3L8.40 9.00L13.80 3"/></svg>
<svg style="left:2021.00px;top:567.30px" width="13.60" height="15.50" stroke="#c4c4c4" stroke-width="1.4"><path d="M0 3.00H13.60"/><path d="M0 7.75H13.60"/><path d="M0 12.50H13.60"/></svg>
<div style="left:447.8px;top:601.2px;width:160.2px;height:2.8px;background:#f2a33c;"></div>
<span class="t" style="left:454.50px;top:612px;font-size:16.3px;transform:scaleX(0.9409);color:#1f1f1f;">Pozycje magazynowe</span>
<div style="left:1660.0px;top:602.6px;width:178.9px;height:35.0px;background:#dadada;"></div>
<div style="left:1660.0px;top:602.4px;width:178.9px;height:1.6px;background:#c4c4c4;"></div>
<span class="t" style="left:1755.30px;top:613px;font-size:16.3px;transform:scaleX(0.8865);color:#1f1f1f;">INTRASTAT</span>
<div style="left:456.6px;top:649.2px;width:104.1px;height:37.9px;background:#fff;border:1.2px solid #e7e7e7;box-sizing:border-box;"></div>
<div style="left:565.0px;top:649.2px;width:115.0px;height:37.9px;background:#fff;border:1.2px solid #e7e7e7;box-sizing:border-box;"></div>
<div style="left:1959.3px;top:649.2px;width:38.2px;height:37.9px;background:#fff;border:1.2px solid #e7e7e7;box-sizing:border-box;"></div>
<div style="left:2002.0px;top:649.2px;width:37.9px;height:37.9px;background:#fff;border:1.2px solid #e7e7e7;box-sizing:border-box;"></div>
<svg style="left:469.60px;top:657.00px;" width="23.40" height="23.40" viewBox="0 0 24 24" preserveAspectRatio="none" stroke="#93b46c" stroke-width="1.5" stroke-linecap="round" stroke-linejoin="round"><circle cx="12" cy="12" r="11"/><path d="M12 5.5V18.5M5.5 12H18.5"/></svg>
<span class="t" style="left:499.80px;top:662px;font-size:19.0px;transform:scaleX(0.9802);color:#1f1f1f;">Dodaj</span>
<svg style="left:578.20px;top:658.30px;" width="22.20" height="22.20" viewBox="0 0 22 22" preserveAspectRatio="none" stroke="#86a85a" stroke-width="1.4" stroke-linecap="round" stroke-linejoin="round"><path d="M1 21L2.6 14.8L15.6 1.8Q17 0.6 18.4 1.8L20.2 3.6Q21.4 5 20.2 6.4L7.2 19.4Z"/><path d="M2.6 14.8L7.2 19.4M14 3.5L18.5 8"/></svg>
<span class="t" style="left:607.50px;top:662px;font-size:19.0px;transform:scaleX(0.9463);color:#1f1f1f;">Popraw</span>
<svg style="left:1966.60px;top:656.40px;" width="24.40" height="24.90" viewBox="0 0 24 24" preserveAspectRatio="none" stroke="#5585c6" stroke-width="1.5" stroke-linecap="round" stroke-linejoin="round"><circle cx="9" cy="9" r="8"/><path d="M15.2 15.2L21 21.2" stroke-width="3.4"/><path d="M15.6 15.6L21 21.2" stroke="#dfe9f6" stroke-width="1.2"/></svg>
<svg style="left:2013.20px;top:656.80px" width="16.30" height="21.30" stroke="#4f84c8" stroke-width="1.4"><path d="M0 3.00H16.30"/><path d="M0 8.10H16.30"/><path d="M0 13.20H16.30"/><path d="M0 18.30H16.30"/></svg>
<span class="t" style="left:461.80px;top:703px;font-size:16.8px;transform:scaleX(1.0500);color:#6e6e6e;font-weight:700;">Pozycje dokumentu zakupu</span>
<svg style="left:2023.50px;top:704.30px;" width="7.70" height="9.10" viewBox="0 0 9 9.5" preserveAspectRatio="none" stroke="#b5b5b5" stroke-width="1" stroke-linecap="round" stroke-linejoin="round"><path d="M2 1H7V5.5H2ZM0.5 5.5H8.5M4.5 5.5V9"/></svg>
<div style="left:462.0px;top:722.5px;width:1573.7px;height:1.3px;background:#e0e0e0;"></div>
<svg style="left:467.30px;top:732.30px" width="10.20" height="13.10" stroke="#c2c2c2" stroke-width="1.3"><path d="M0 3.00H10.20"/><path d="M0 6.55H10.20"/><path d="M0 10.10H10.20"/></svg>
<span class="t" style="left:517.20px;top:733px;font-size:16.9px;transform:scaleX(0.8599);color:#606060;">Lp.</span>
<svg style="left:540.5px;top:731.4px" width="17" height="14" viewBox="0 0 17 14" stroke="#5a8fd0" stroke-width="2"><path d="M1.4 10.2L6 5.4L10.6 10.2"/></svg>
<span class="t" style="left:553.60px;top:734px;font-size:11.0px;transform:scaleX(0.9000);color:#6f8fba;">1</span>
<span class="t" style="left:572.00px;top:733px;font-size:16.9px;transform:scaleX(0.9560);color:#606060;">Indeks</span>
<span class="t" style="left:1707.29px;top:733px;font-size:16.9px;transform:scaleX(0.9750);color:#606060;">Wartość netto</span>
<span class="t" style="left:1829.80px;top:733px;font-size:16.9px;transform:scaleX(1.0233);color:#606060;">Wartość brutto</span>
<span class="t" style="left:1970.60px;top:733px;font-size:16.9px;transform:scaleX(0.9455);color:#606060;">Status</span>
<div style="left:462.0px;top:754.3px;width:1573.7px;height:1.2px;background:#e6e6e6;"></div>
<div style="left:462.0px;top:788.2px;width:1573.7px;height:1.2px;background:#efefef;"></div>
<div style="left:486.0px;top:789.7px;width:80.4px;height:32.5px;background:#d3d3d3;"></div>
<div style="left:569.0px;top:789.7px;width:1249.7px;height:32.5px;background:#d3d3d3;"></div>
<div style="left:1821.3px;top:789.7px;width:126.2px;height:32.5px;background:#d3d3d3;"></div>
<div style="left:1950.0px;top:789.7px;width:85.3px;height:32.5px;background:#d3d3d3;"></div>
<div style="left:462.0px;top:822.4px;width:24.0px;height:1.2px;background:#e9e9e9;"></div>
<div style="left:464.2px;top:764.5px;width:16.8px;height:15.8px;background:#fff;border:1px solid #dcdcdc;box-sizing:border-box;"></div>
<span class="t" style="left:553.97px;top:765px;font-size:19.0px;transform:scaleX(0.8850);">1</span>
<span class="t" style="left:571.80px;top:765px;font-size:19.0px;transform:scaleX(0.8850);">0002</span>
<span class="t" style="left:1765.37px;top:765px;font-size:19.0px;transform:scaleX(0.8864);">499,95</span>
<span class="t" style="left:1893.97px;top:765px;font-size:19.0px;transform:scaleX(0.8864);">539,95</span>
<svg style="left:1984.00px;top:764.10px" width="19.00" height="15.00" stroke="#a6b786" stroke-width="1.3"><path d="M3.00 8.04L7.42 12.00L16.00 3.00" stroke-linejoin="miter" stroke-linecap="butt"/></svg>
<div style="left:464.2px;top:798.1px;width:16.8px;height:15.8px;background:#fff;border:1px solid #dcdcdc;box-sizing:border-box;"></div>
<span class="t" style="left:553.97px;top:798px;font-size:19.0px;transform:scaleX(0.8850);">2</span>
<span class="t" style="left:571.80px;top:798px;font-size:19.0px;transform:scaleX(0.8850);">0001</span>
<span class="t" style="left:1765.37px;top:798px;font-size:19.0px;transform:scaleX(0.8864);">370,40</span>
<span class="t" style="left:1893.97px;top:798px;font-size:19.0px;transform:scaleX(0.8864);">400,03</span>
<svg style="left:1984.00px;top:797.70px" width="19.00" height="15.00" stroke="#a6b786" stroke-width="1.3"><path d="M3.00 8.04L7.42 12.00L16.00 3.00" stroke-linejoin="miter" stroke-linecap="butt"/></svg>
<span class="t" style="left:1464.10px;top:1191px;font-size:16.7px;transform:scaleX(0.9317);color:#1f1f1f;">Wartość PLN</span>
<span class="t" style="left:1593.50px;top:1184px;font-size:30.5px;transform:scaleX(0.9051);color:#111;">3 638,76 PLN</span>
<span class="t" style="left:1793.30px;top:1191px;font-size:16.7px;transform:scaleX(0.9518);color:#1f1f1f;">Wartość</span>
<span class="t" style="left:1889.30px;top:1184px;font-size:30.5px;transform:scaleX(0.8934);color:#111;">939,98 USD</span>
<div style="left:1447.3px;top:1217.0px;width:115.2px;height:3.1px;border:1.4px solid #bfc8ce;border-top:none;box-sizing:border-box;"></div>
<div style="left:1562.5px;top:1217.0px;width:207.8px;height:3.1px;border:1.4px solid #bfc8ce;border-top:none;box-sizing:border-box;"></div>
<div style="left:1776.0px;top:1217.0px;width:82.8px;height:3.1px;border:1.4px solid #bfc8ce;border-top:none;box-sizing:border-box;"></div>
<div style="left:1858.8px;top:1217.0px;width:187.2px;height:3.1px;border:1.4px solid #bfc8ce;border-top:none;box-sizing:border-box;"></div>
<span class="t" style="left:1738.40px;top:1238px;font-size:16.3px;transform:scaleX(0.9690);color:#6f6f6f;">Wyjdź z dokumentu bez zatwierdzania</span>
<div style="left:2015.2px;top:1252.6px;width:21.8px;height:2.6px;border:1.4px solid #d5dadd;border-top:none;box-sizing:border-box;"></div>
<div style="left:443.6px;top:1266.0px;width:1610.2px;height:46.2px;background:#fafafa;"></div>
<div style="left:447.3px;top:1271.3px;width:39.0px;height:36.8px;background:#fff;border:1.2px solid #e6e6e6;box-sizing:border-box;"></div>
<div style="left:488.6px;top:1271.3px;width:107.8px;height:36.8px;background:#fff;border:1.2px solid #e6e6e6;box-sizing:border-box;"></div>
<div style="left:598.8px;top:1271.3px;width:106.0px;height:36.8px;background:#fff;border:1.2px solid #e6e6e6;box-sizing:border-box;"></div>
<div style="left:1932.5px;top:1271.3px;width:117.0px;height:36.8px;background:#fff;border:1.2px solid #e6e6e6;box-sizing:border-box;"></div>
<svg style="left:459.20px;top:1279.50px" width="15.60" height="20.80" stroke="#8e8e8e" stroke-width="1.6"><path d="M0 3.00H15.60"/><path d="M0 7.93H15.60"/><path d="M0 12.87H15.60"/><path d="M0 17.80H15.60"/></svg>
<svg style="left:506.40px;top:1281.20px" width="23.00" height="17.80" stroke="#8eab66" stroke-width="1.5"><path d="M3.00 9.61L8.78 14.80L20.00 3.00" stroke-linejoin="miter" stroke-linecap="butt"/></svg>
<span class="t" style="left:535.80px;top:1282px;font-size:16.6px;transform:scaleX(0.9041);color:#a9a9ad;">Zapi<u>s</u>z</span>
<svg style="left:618.60px;top:1280.40px" width="19.40" height="19.00" stroke="#c4506c" stroke-width="1.4"><path d="M3 3L16.40 16.00M16.40 3L3 16.00"/></svg>
<span class="t" style="left:646.00px;top:1282px;font-size:16.6px;transform:scaleX(0.9144);color:#a9a9ad;"><u>A</u>nuluj</span>
<svg style="left:1952.60px;top:1280.40px" width="19.40" height="19.00" stroke="#c4506c" stroke-width="1.4"><path d="M3 3L16.40 16.00M16.40 3L3 16.00"/></svg>
<span class="t" style="left:1980.00px;top:1282px;font-size:16.6px;transform:scaleX(0.9122);color:#1f1f1f;"><u>Z</u>amknij</span>
<div style="left:610.9px;top:572.9px;width:1137.0px;height:596.4px;background:#fff;border:1.6px solid #8a8a8a;box-sizing:border-box;box-shadow:0 0 20px rgba(0,0,0,.2),0 7px 12px -3px rgba(0,0,0,.24);"></div>
<svg style="left:626.60px;top:588.00px;" width="17.20" height="17.40" viewBox="0 0 18 18" preserveAspectRatio="none" stroke="#90abd6" stroke-width="1.5" stroke-linecap="round" stroke-linejoin="round"><rect x="1" y="1" width="16" height="13.6" rx="0.6"/><path d="M5 17h8" stroke-width="1.3" stroke-opacity="0.8"/></svg>
<span class="t" style="left:653.80px;top:588px;font-size:19.0px;transform:scaleX(0.9395);color:#2a2a2a;">Pozycja dokumentu zakupu - Podgląd</span>
<svg style="left:1710.90px;top:586.20px" width="21.10" height="20.40" stroke="#222" stroke-width="1.5"><path d="M3 3L18.10 17.40M18.10 3L3 17.40"/></svg>
<svg style="left:643.30px;top:639.30px;" width="69.50" height="68.60" viewBox="0 0 70 69" preserveAspectRatio="none" stroke="#737373" stroke-width="2.7" stroke-linecap="round" stroke-linejoin="round"><g stroke="#737373"><path d="M9.2 45V6.5Q9.2 1.8 14 1.8H44.5L60.8 18V45"/><path d="M45.5 7V13.5Q45.5 17.6 49.6 17.6H55.5" stroke-width="2.5"/><path d="M19.5 34.6H35M29 27.8L35.8 34.6L29 41.4" stroke-width="2.9"/><path d="M49.8 30.8Q45.4 28.6 43 31.2Q41.4 34.4 45.6 35.8Q50.6 37.4 49 40.8Q46.4 43.4 41.8 41.4M45.6 26.8V44.6" stroke-width="2.3"/></g><g stroke="#3d7fd6"><rect x="1.6" y="52.8" width="66.8" height="14.8" rx="1.8" stroke-width="2.9"/><path d="M8.5 60.2H61.5" stroke-width="3.4" stroke-linecap="butt"/></g></svg>
<span class="t" style="left:740.00px;top:634px;font-size:26.0px;transform:scaleX(0.9471);color:#1a1a1a;">FVAT 3244/2019/01, 2019-08-13  Lp. 2</span>
<span class="t" style="left:742.00px;top:678px;font-size:16.3px;transform:scaleX(0.9972);color:#6f6f6f;">Kartoteka obrotowa</span>
<span class="t" style="left:894.80px;top:677px;font-size:19.0px;transform:scaleX(0.8923);color:#1a1a1a;">0001 - ROWEREK BIEGOWY RUNNER Rowerek biegowy RUNNER</span>
<div style="left:891.4px;top:697.7px;width:589.0px;height:3.1px;border:1.4px solid #bfc8ce;border-top:none;box-sizing:border-box;"></div>
<svg style="left:1486.00px;top:677.60px" width="13.80" height="15.60" stroke="#c4c4c4" stroke-width="1.4"><path d="M0 3.00H13.80"/><path d="M0 7.80H13.80"/><path d="M0 12.60H13.80"/></svg>
<span class="t" style="left:1516.40px;top:638px;font-size:16.3px;transform:scaleX(0.9392);color:#6f6f6f;">Lp. zewnętrzne</span>
<span class="t" style="left:1720.57px;top:637px;font-size:19.0px;transform:scaleX(0.8850);">2</span>
<div style="left:1628.0px;top:656.7px;width:106.0px;height:3.1px;border:1.4px solid #bfc8ce;border-top:none;box-sizing:border-box;"></div>
<span class="t" style="left:1539.70px;top:674px;font-size:16.3px;transform:scaleX(0.9223);color:#6f6f6f;">Stawka VAT</span>
<span class="t" style="left:1631.60px;top:673px;font-size:19.0px;transform:scaleX(0.8450);">8%</span>
<div style="left:1628.0px;top:692.2px;width:80.7px;height:3.1px;border:1.4px solid #bfc8ce;border-top:none;box-sizing:border-box;"></div>
<svg style="left:1685.00px;top:674.40px" width="16.60" height="12.00" stroke="#b0b0b0" stroke-width="1.3"><path d="M3 3L8.30 9.00L13.60 3"/></svg>
<svg style="left:1714.40px;top:674.30px" width="13.40" height="15.50" stroke="#c4c4c4" stroke-width="1.4"><path d="M0 3.00H13.40"/><path d="M0 7.75H13.40"/><path d="M0 12.50H13.40"/></svg>
<div style="left:616.8px;top:731.5px;width:141.2px;height:34.5px;background:#dcdcdc;"></div>
<div style="left:616.8px;top:731.2px;width:141.2px;height:1.6px;background:#c6c6c6;"></div>
<span class="t" style="left:623.30px;top:741px;font-size:16.3px;transform:scaleX(0.9668);color:#1f1f1f;">Dane podstawowe</span>
<div style="left:761.0px;top:730.8px;width:138.4px;height:2.5px;background:#f2a33c;"></div>
<span class="t" style="left:767.70px;top:741px;font-size:16.3px;transform:scaleX(0.9586);color:#1f1f1f;">Dane rozszerzone</span>
<div style="left:902.3px;top:731.5px;width:59.0px;height:34.5px;background:#dcdcdc;"></div>
<div style="left:902.3px;top:731.2px;width:59.0px;height:1.6px;background:#c6c6c6;"></div>
<span class="t" style="left:908.20px;top:741px;font-size:16.3px;transform:scaleX(0.9444);color:#1f1f1f;">Rabaty</span>
<span class="t" style="left:625.60px;top:782px;font-size:16.3px;transform:scaleX(0.9374);color:#6f6f6f;">Ilość</span>
<span class="t" style="left:940.00px;top:782px;font-size:16.3px;transform:scaleX(0.9743);color:#6f6f6f;">Cena przed bonifikatą</span>
<span class="t" style="left:1100.20px;top:782px;font-size:16.3px;transform:scaleX(0.9932);color:#6f6f6f;">Wartość przed bonifikatą</span>
<span class="t" style="left:1283.50px;top:782px;font-size:16.3px;transform:scaleX(0.9848);color:#6f6f6f;">Wartość bonifikaty</span>
<span class="t" style="left:1432.50px;top:782px;font-size:16.3px;transform:scaleX(0.8966);color:#6f6f6f;">Cena</span>
<span class="t" style="left:1563.70px;top:782px;font-size:16.3px;transform:scaleX(0.9769);color:#6f6f6f;">Wartość</span>
<span class="t" style="left:1048.20px;top:812px;font-size:19.0px;transform:scaleX(0.8867);color:#1a1a1a;">18,52</span>
<div style="left:940.0px;top:831.7px;width:154.6px;height:3.1px;border:1.4px solid #bfc8ce;border-top:none;box-sizing:border-box;"></div>
<span class="t" style="left:1222.07px;top:812px;font-size:19.0px;transform:scaleX(0.8864);color:#1a1a1a;">370,40</span>
<div style="left:1100.2px;top:831.7px;width:177.6px;height:3.1px;border:1.4px solid #bfc8ce;border-top:none;box-sizing:border-box;"></div>
<span class="t" style="left:1390.22px;top:812px;font-size:19.0px;transform:scaleX(0.8871);color:#1a1a1a;">0,00</span>
<div style="left:1283.5px;top:831.7px;width:143.9px;height:3.1px;border:1.4px solid #bfc8ce;border-top:none;box-sizing:border-box;"></div>
<span class="t" style="left:1511.60px;top:812px;font-size:19.0px;transform:scaleX(0.8867);color:#1a1a1a;">18,52</span>
<div style="left:1432.5px;top:831.7px;width:126.1px;height:3.1px;border:1.4px solid #bfc8ce;border-top:none;box-sizing:border-box;"></div>
<span class="t" style="left:1651.37px;top:812px;font-size:19.0px;transform:scaleX(0.8864);color:#1a1a1a;">370,40</span>
<div style="left:1563.7px;top:831.7px;width:143.7px;height:3.1px;border:1.4px solid #bfc8ce;border-top:none;box-sizing:border-box;"></div>
<span class="t" style="left:1048.20px;top:849px;font-size:19.0px;transform:scaleX(0.8867);color:#1a1a1a;">20,00</span>
<div style="left:940.0px;top:869.3px;width:154.6px;height:3.1px;border:1.4px solid #bfc8ce;border-top:none;box-sizing:border-box;"></div>
<span class="t" style="left:1222.07px;top:849px;font-size:19.0px;transform:scaleX(0.8864);color:#1a1a1a;">400,03</span>
<div style="left:1100.2px;top:869.3px;width:177.6px;height:3.1px;border:1.4px solid #bfc8ce;border-top:none;box-sizing:border-box;"></div>
<span class="t" style="left:1390.22px;top:849px;font-size:19.0px;transform:scaleX(0.8871);color:#1a1a1a;">0,00</span>
<div style="left:1283.5px;top:869.3px;width:143.9px;height:3.1px;border:1.4px solid #bfc8ce;border-top:none;box-sizing:border-box;"></div>
<span class="t" style="left:1511.60px;top:849px;font-size:19.0px;transform:scaleX(0.8867);color:#1a1a1a;">20,00</span>
<div style="left:1432.5px;top:869.3px;width:126.1px;height:3.1px;border:1.4px solid #bfc8ce;border-top:none;box-sizing:border-box;"></div>
<span class="t" style="left:1651.37px;top:849px;font-size:19.0px;transform:scaleX(0.8864);color:#1a1a1a;">400,03</span>
<div style="left:1563.7px;top:869.3px;width:143.7px;height:3.1px;border:1.4px solid #bfc8ce;border-top:none;box-sizing:border-box;"></div>
<span class="t" style="left:721.60px;top:812px;font-size:19.0px;transform:scaleX(0.8782);color:#1a1a1a;">20,00</span>
<div style="left:625.6px;top:831.9px;width:142.7px;height:3.1px;border:1.4px solid #bfc8ce;border-top:none;box-sizing:border-box;"></div>
<span class="t" style="left:777.50px;top:812px;font-size:19.0px;transform:scaleX(0.8717);color:#1a1a1a;">szt</span>
<div style="left:773.6px;top:830.7px;width:80.9px;height:3.1px;border:1.4px solid #bfc8ce;border-top:none;box-sizing:border-box;"></div>
<svg style="left:830.80px;top:813.60px" width="16.20" height="12.00" stroke="#b0b0b0" stroke-width="1.3"><path d="M3 3L8.10 9.00L13.20 3"/></svg>
<svg style="left:859.70px;top:812.70px" width="13.80" height="15.70" stroke="#c4c4c4" stroke-width="1.4"><path d="M0 3.00H13.80"/><path d="M0 7.85H13.80"/><path d="M0 12.70H13.80"/></svg>
<span class="t" style="left:892.80px;top:813px;font-size:16.3px;transform:scaleX(1.0062);color:#6f6f6f;">Netto</span>
<span class="t" style="left:890.40px;top:851px;font-size:16.3px;transform:scaleX(0.9559);color:#6f6f6f;">Brutto</span>
<span class="t" style="left:1208.40px;top:888px;font-size:16.3px;transform:scaleX(0.9325);color:#6f6f6f;">Bonifikata</span>
<span class="t" style="left:1375.04px;top:887px;font-size:19.0px;transform:scaleX(0.8755);color:#1a1a1a;">0,00%</span>
<div style="left:1283.5px;top:907.4px;width:143.9px;height:3.1px;border:1.4px solid #bfc8ce;border-top:none;box-sizing:border-box;"></div>
<span class="t" style="left:1466.00px;top:888px;font-size:16.3px;transform:scaleX(0.9678);color:#6f6f6f;">Wartość VAT</span>
<span class="t" style="left:1660.80px;top:887px;font-size:19.0px;transform:scaleX(0.8867);color:#1a1a1a;">29,63</span>
<div style="left:1563.7px;top:907.4px;width:143.7px;height:3.1px;border:1.4px solid #bfc8ce;border-top:none;box-sizing:border-box;"></div>
<span class="t" style="left:630.40px;top:932px;font-size:16.3px;transform:scaleX(0.9677);color:#6f6f6f;">Dodatkowe koszty zakupu</span>
<span class="t" style="left:825.70px;top:932px;font-size:16.3px;transform:scaleX(0.8674);color:#6f6f6f;">PLN</span>
<span class="t" style="left:945.00px;top:932px;font-size:16.3px;transform:scaleX(0.9604);color:#6f6f6f;">Dodatkowa cena</span>
<span class="t" style="left:816.30px;top:964px;font-size:19.0px;transform:scaleX(0.8659);color:#1a1a1a;">0,00</span>
<div style="left:625.6px;top:983.5px;width:227.9px;height:3.1px;border:1.4px solid #bfc8ce;border-top:none;box-sizing:border-box;"></div>
<div style="left:858.8px;top:979.3px;width:21.0px;height:2.6px;border:1.4px solid #d5dadd;border-top:none;box-sizing:border-box;"></div>
<span class="t" style="left:1029.13px;top:964px;font-size:19.0px;transform:scaleX(0.8862);color:#1a1a1a;">18,5200</span>
<div style="left:940.0px;top:983.5px;width:154.6px;height:3.1px;border:1.4px solid #bfc8ce;border-top:none;box-sizing:border-box;"></div>
<span class="t" style="left:623.60px;top:1000px;font-size:18.6px;transform:scaleX(0.9692);color:#2b72b8;font-weight:700;">Ewidencja VAT-7</span>
<span class="t" style="left:648.60px;top:1031px;font-size:16.3px;transform:scaleX(0.9691);color:#6f6f6f;">Wiele ewidencji VAT-7</span>
<div style="left:811.7px;top:1046.3px;width:20.7px;height:2.6px;border:1.4px solid #d5dadd;border-top:none;box-sizing:border-box;"></div>
<span class="t" style="left:853.90px;top:1031px;font-size:16.3px;transform:scaleX(0.9679);color:#6f6f6f;">Zwiększ nabycie o VAT niepodlegający odliczeniu</span>
<div style="left:1207.0px;top:1046.3px;width:21.3px;height:2.6px;border:1.4px solid #d5dadd;border-top:none;box-sizing:border-box;"></div>
<svg style="left:1208.00px;top:1032.00px" width="18.60" height="14.60" stroke="#cdcdcd" stroke-width="1.4"><path d="M3.00 7.82L7.28 11.60L15.60 3.00" stroke-linejoin="miter" stroke-linecap="butt"/></svg>
<span class="t" style="left:1249.80px;top:1031px;font-size:16.3px;transform:scaleX(0.9772);color:#6f6f6f;">Odwrotne obciążenie VAT</span>
<div style="left:1440.0px;top:1046.3px;width:21.0px;height:2.6px;border:1.4px solid #d5dadd;border-top:none;box-sizing:border-box;"></div>
<span class="t" style="left:1482.70px;top:1031px;font-size:16.3px;transform:scaleX(0.9381);color:#6f6f6f;">Podlega MPP</span>
<div style="left:1584.5px;top:1046.3px;width:20.7px;height:2.6px;border:1.4px solid #d5dadd;border-top:none;box-sizing:border-box;"></div>
<div style="left:1710.7px;top:774.2px;width:25.2px;height:279.2px;background:#f0f0f0;"></div>
<div style="left:1710.7px;top:797.6px;width:25.2px;height:181.4px;background:#bcbcbc;"></div>
<svg style="left:1718.6px;top:782.4px" width="10" height="7" viewBox="0 0 10 7" stroke="#8c8c8c" stroke-width="2"><path d="M1 5.8L5 1.6L9 5.8"/></svg>
<svg style="left:1718.6px;top:1038px" width="10" height="7" viewBox="0 0 10 7" stroke="#8c8c8c" stroke-width="2"><path d="M1 1.2L5 5.4L9 1.2"/></svg>
<span class="t" style="left:1120.40px;top:1082px;font-size:16.7px;transform:scaleX(0.9661);color:#1f1f1f;">Wartość netto</span>
<span class="t" style="left:1258.40px;top:1076px;font-size:30.5px;transform:scaleX(0.8922);color:#111;">370,40 USD</span>
<span class="t" style="left:1437.50px;top:1082px;font-size:16.7px;transform:scaleX(0.9827);color:#1f1f1f;">Wartość brutto</span>
<span class="t" style="left:1581.90px;top:1076px;font-size:30.5px;transform:scaleX(0.8982);color:#111;">400,03 USD</span>
<div style="left:1103.6px;top:1109.2px;width:124.2px;height:3.1px;border:1.4px solid #bfc8ce;border-top:none;box-sizing:border-box;"></div>
<div style="left:1227.8px;top:1109.2px;width:187.2px;height:3.1px;border:1.4px solid #bfc8ce;border-top:none;box-sizing:border-box;"></div>
<div style="left:1420.0px;top:1109.2px;width:130.8px;height:3.1px;border:1.4px solid #bfc8ce;border-top:none;box-sizing:border-box;"></div>
<div style="left:1550.8px;top:1109.2px;width:188.2px;height:3.1px;border:1.4px solid #bfc8ce;border-top:none;box-sizing:border-box;"></div>
<div style="left:612.3px;top:1122.0px;width:1134.2px;height:45.9px;background:#f8f8f8;"></div>
<div style="left:615.8px;top:1127.2px;width:39.8px;height:36.9px;background:#fff;border:1.2px solid #e6e6e6;box-sizing:border-box;"></div>
<svg style="left:627.90px;top:1135.00px" width="15.40" height="20.80" stroke="#8e8e8e" stroke-width="1.6"><path d="M0 3.00H15.40"/><path d="M0 7.93H15.40"/><path d="M0 12.87H15.40"/><path d="M0 17.80H15.40"/></svg>
<div style="left:1625.9px;top:1127.2px;width:116.9px;height:36.9px;background:#fff;border:1.2px solid #e6e6e6;box-sizing:border-box;"></div>
<svg style="left:1645.50px;top:1136.00px" width="19.30" height="19.00" stroke="#c4506c" stroke-width="1.4"><path d="M3 3L16.30 16.00M16.30 3L3 16.00"/></svg>
<span class="t" style="left:1673.00px;top:1138px;font-size:16.6px;transform:scaleX(0.9122);color:#1f1f1f;"><u>Z</u>amknij</span>
</body></html>
